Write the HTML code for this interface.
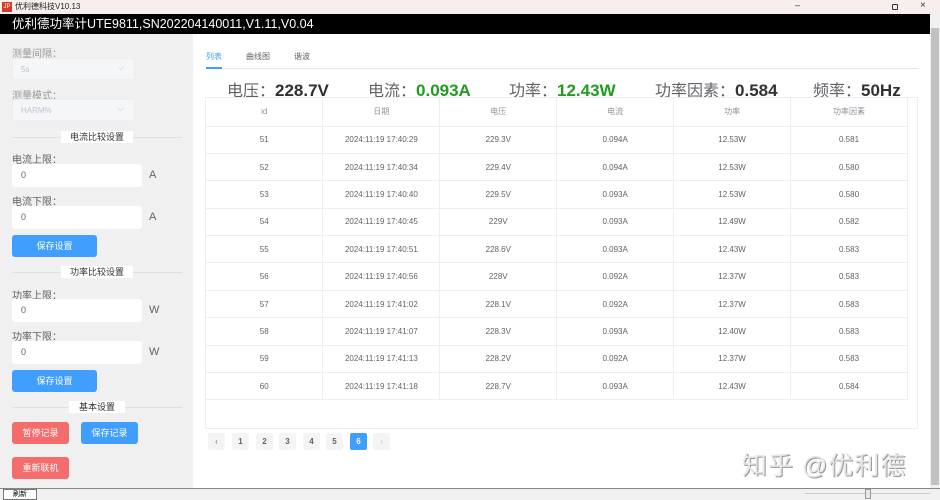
<!DOCTYPE html>
<html><head><meta charset="utf-8"><style>
*{margin:0;padding:0;box-sizing:border-box}
body{width:940px;height:500px;overflow:hidden;background:#fff;font-family:"Liberation Sans","Noto Sans CJK SC",sans-serif;position:relative;color:#606266}
.a{position:absolute}
.lbl{font-size:10px;color:#606266;left:12px}
.sel{left:12px;width:123px;height:22px;background:#f5f6f8;border:1px solid #eceef2;border-radius:3px;font-size:8px;color:#c0c4cc;padding:6px 8px}
.sel:after{content:"⌵";position:absolute;right:10px;top:3px;font-size:9px;color:#c0c4cc}
.inp{left:12px;width:130px;height:23px;background:#fff;border-radius:3px;font-size:9px;color:#606266;padding:6px 9px}
.unit{left:149px;font-size:11px;color:#606266}
.div{left:12px;width:170px;height:1px;background:#dcdfe6}
.dt{background:#fff;font-size:9px;color:#303133;text-align:center;height:12px;line-height:12px}
.btn{height:22px;border-radius:3px;color:#fff;font-size:9px;text-align:center;line-height:22px}
.blue{background:#409eff}.red{background:#f56c6c}
table{border-collapse:collapse;position:absolute;left:206px;top:98px;width:702px;table-layout:fixed}
td{border-right:1px solid #ebeef5;border-bottom:1px solid #ebeef5;height:27.4px;text-align:center;font-size:8px;color:#606266}
tr.h td{height:28px;color:#909399}
.pg{top:433px;width:17px;height:17px;background:#f4f4f5;font-size:8px;text-align:center;line-height:17px;color:#606266;font-weight:bold;border-radius:2px}
.big{top:77px;font-size:16px;color:#606266;white-space:nowrap}
.big b{font-size:17px;color:#303133}
.big b.g{color:#1f9d1f}
</style></head><body>
<div class="a" style="left:0;top:0;width:940px;height:14px;background:#f6efec"></div>
<div class="a" style="left:2px;top:2px;width:10px;height:10px;background:#d23b2a;color:#fff;font-size:6px;line-height:10px;text-align:center">JP</div>
<div class="a" style="left:15px;top:1px;font-size:8px;color:#222">优利德科技V10.13</div>
<div class="a" style="left:795px;top:0;font-size:9px;color:#333">–</div>
<div class="a" style="left:892px;top:4px;width:6px;height:6px;border:1px solid #333;border-radius:1px"></div>
<div class="a" style="left:920px;top:0px;font-size:10px;color:#333">×</div>
<div class="a" style="left:0;top:14px;width:930px;height:20px;background:#000;color:#fff;font-size:12.5px;line-height:20px;padding-left:12px">优利德功率计UTE9811,SN202204140011,V1.11,V0.04</div>
<div class="a" style="left:930px;top:14px;width:10px;height:474px;background:#f0f0f0"></div>
<div class="a" style="left:931px;top:28px;width:8px;height:457px;background:#c1c1c1"></div>
<div class="a" style="left:0;top:34px;width:193px;height:454px;background:#f0f0f0"></div>
<div class="a lbl" style="top:45px;color:#999">测量间隔：</div>
<div class="a sel" style="top:58px">5s</div>
<div class="a lbl" style="top:87px;color:#999">测量模式：</div>
<div class="a sel" style="top:99px">HARM%</div>
<div class="a div" style="top:137px"></div>
<div class="a dt" style="left:61px;top:131px;width:72px">电流比较设置</div>
<div class="a lbl" style="top:151px">电流上限：</div>
<div class="a inp" style="top:164px">0</div><div class="a unit" style="top:169px">A</div>
<div class="a lbl" style="top:193px">电流下限：</div>
<div class="a inp" style="top:206px">0</div><div class="a unit" style="top:211px">A</div>
<div class="a btn blue" style="left:12px;top:235px;width:85px">保存设置</div>
<div class="a div" style="top:272px"></div>
<div class="a dt" style="left:61px;top:266px;width:72px">功率比较设置</div>
<div class="a lbl" style="top:287px">功率上限：</div>
<div class="a inp" style="top:299px">0</div><div class="a unit" style="top:304px">W</div>
<div class="a lbl" style="top:328px">功率下限：</div>
<div class="a inp" style="top:341px">0</div><div class="a unit" style="top:346px">W</div>
<div class="a btn blue" style="left:12px;top:370px;width:85px">保存设置</div>
<div class="a div" style="top:407px"></div>
<div class="a dt" style="left:69px;top:401px;width:56px">基本设置</div>
<div class="a btn red" style="left:12px;top:422px;width:57px">暂停记录</div>
<div class="a btn blue" style="left:81px;top:422px;width:57px">保存记录</div>
<div class="a btn red" style="left:12px;top:457px;width:57px">重新联机</div>
<div class="a" style="left:0;top:488px;width:940px;height:12px;background:#f0f0f0;border-top:1px solid #888"></div>
<div class="a" style="left:3px;top:489px;width:34px;height:11px;background:#fff;border:1px solid #777;font-size:7px;text-align:center;line-height:9px;color:#000">刷新</div>
<div class="a" style="left:805px;top:493px;width:125px;height:1px;background:#ccc"></div>
<div class="a" style="left:865px;top:489px;width:6px;height:10px;background:#e8e8e8;border:1px solid #999"></div>
<div class="a" style="left:206px;top:51px;font-size:8px;color:#409eff">列表</div>
<div class="a" style="left:246px;top:51px;font-size:8px;color:#606266">曲线图</div>
<div class="a" style="left:294px;top:51px;font-size:8px;color:#606266">谐波</div>
<div class="a" style="left:206px;top:68px;width:712px;height:1px;background:#e4e7ed"></div>
<div class="a" style="left:206px;top:67px;width:16px;height:2px;background:#409eff"></div>
<div class="a big" style="left:227px">电压：<b>228.7V</b></div>
<div class="a big" style="left:368px">电流：<b class="g">0.093A</b></div>
<div class="a big" style="left:509px">功率：<b class="g">12.43W</b></div>
<div class="a big" style="left:655px">功率因素：<b>0.584</b></div>
<div class="a big" style="left:813px">频率：<b>50Hz</b></div>
<div class="a" style="left:205px;top:97px;width:713px;height:332px;border:1px solid #ebeef5"></div>
<table>
<tr class="h"><td>id</td><td>日期</td><td>电压</td><td>电流</td><td>功率</td><td>功率因素</td></tr>
<tr><td>51</td><td>2024:11:19 17:40:29</td><td>229.3V</td><td>0.094A</td><td>12.53W</td><td>0.581</td></tr>
<tr><td>52</td><td>2024:11:19 17:40:34</td><td>229.4V</td><td>0.094A</td><td>12.53W</td><td>0.580</td></tr>
<tr><td>53</td><td>2024:11:19 17:40:40</td><td>229.5V</td><td>0.093A</td><td>12.53W</td><td>0.580</td></tr>
<tr><td>54</td><td>2024:11:19 17:40:45</td><td>229V</td><td>0.093A</td><td>12.49W</td><td>0.582</td></tr>
<tr><td>55</td><td>2024:11:19 17:40:51</td><td>228.6V</td><td>0.093A</td><td>12.43W</td><td>0.583</td></tr>
<tr><td>56</td><td>2024:11:19 17:40:56</td><td>228V</td><td>0.092A</td><td>12.37W</td><td>0.583</td></tr>
<tr><td>57</td><td>2024:11:19 17:41:02</td><td>228.1V</td><td>0.092A</td><td>12.37W</td><td>0.583</td></tr>
<tr><td>58</td><td>2024:11:19 17:41:07</td><td>228.3V</td><td>0.093A</td><td>12.40W</td><td>0.583</td></tr>
<tr><td>59</td><td>2024:11:19 17:41:13</td><td>228.2V</td><td>0.092A</td><td>12.37W</td><td>0.583</td></tr>
<tr><td>60</td><td>2024:11:19 17:41:18</td><td>228.7V</td><td>0.093A</td><td>12.43W</td><td>0.584</td></tr>
</table>
<div class="a pg" style="left:208px;font-weight:normal">‹</div>
<div class="a pg" style="left:232px">1</div>
<div class="a pg" style="left:256px">2</div>
<div class="a pg" style="left:279px">3</div>
<div class="a pg" style="left:303px">4</div>
<div class="a pg" style="left:326px">5</div>
<div class="a pg" style="left:350px;background:#409eff;color:#fff">6</div>
<div class="a pg" style="left:373px;color:#c0c4cc;font-weight:normal">›</div>
<div class="a" style="left:742px;top:446px;font-size:25px;color:#e6e6e6;text-shadow:1px 1px 0 #999;letter-spacing:1px">知乎 @优利德</div>
</body></html>
